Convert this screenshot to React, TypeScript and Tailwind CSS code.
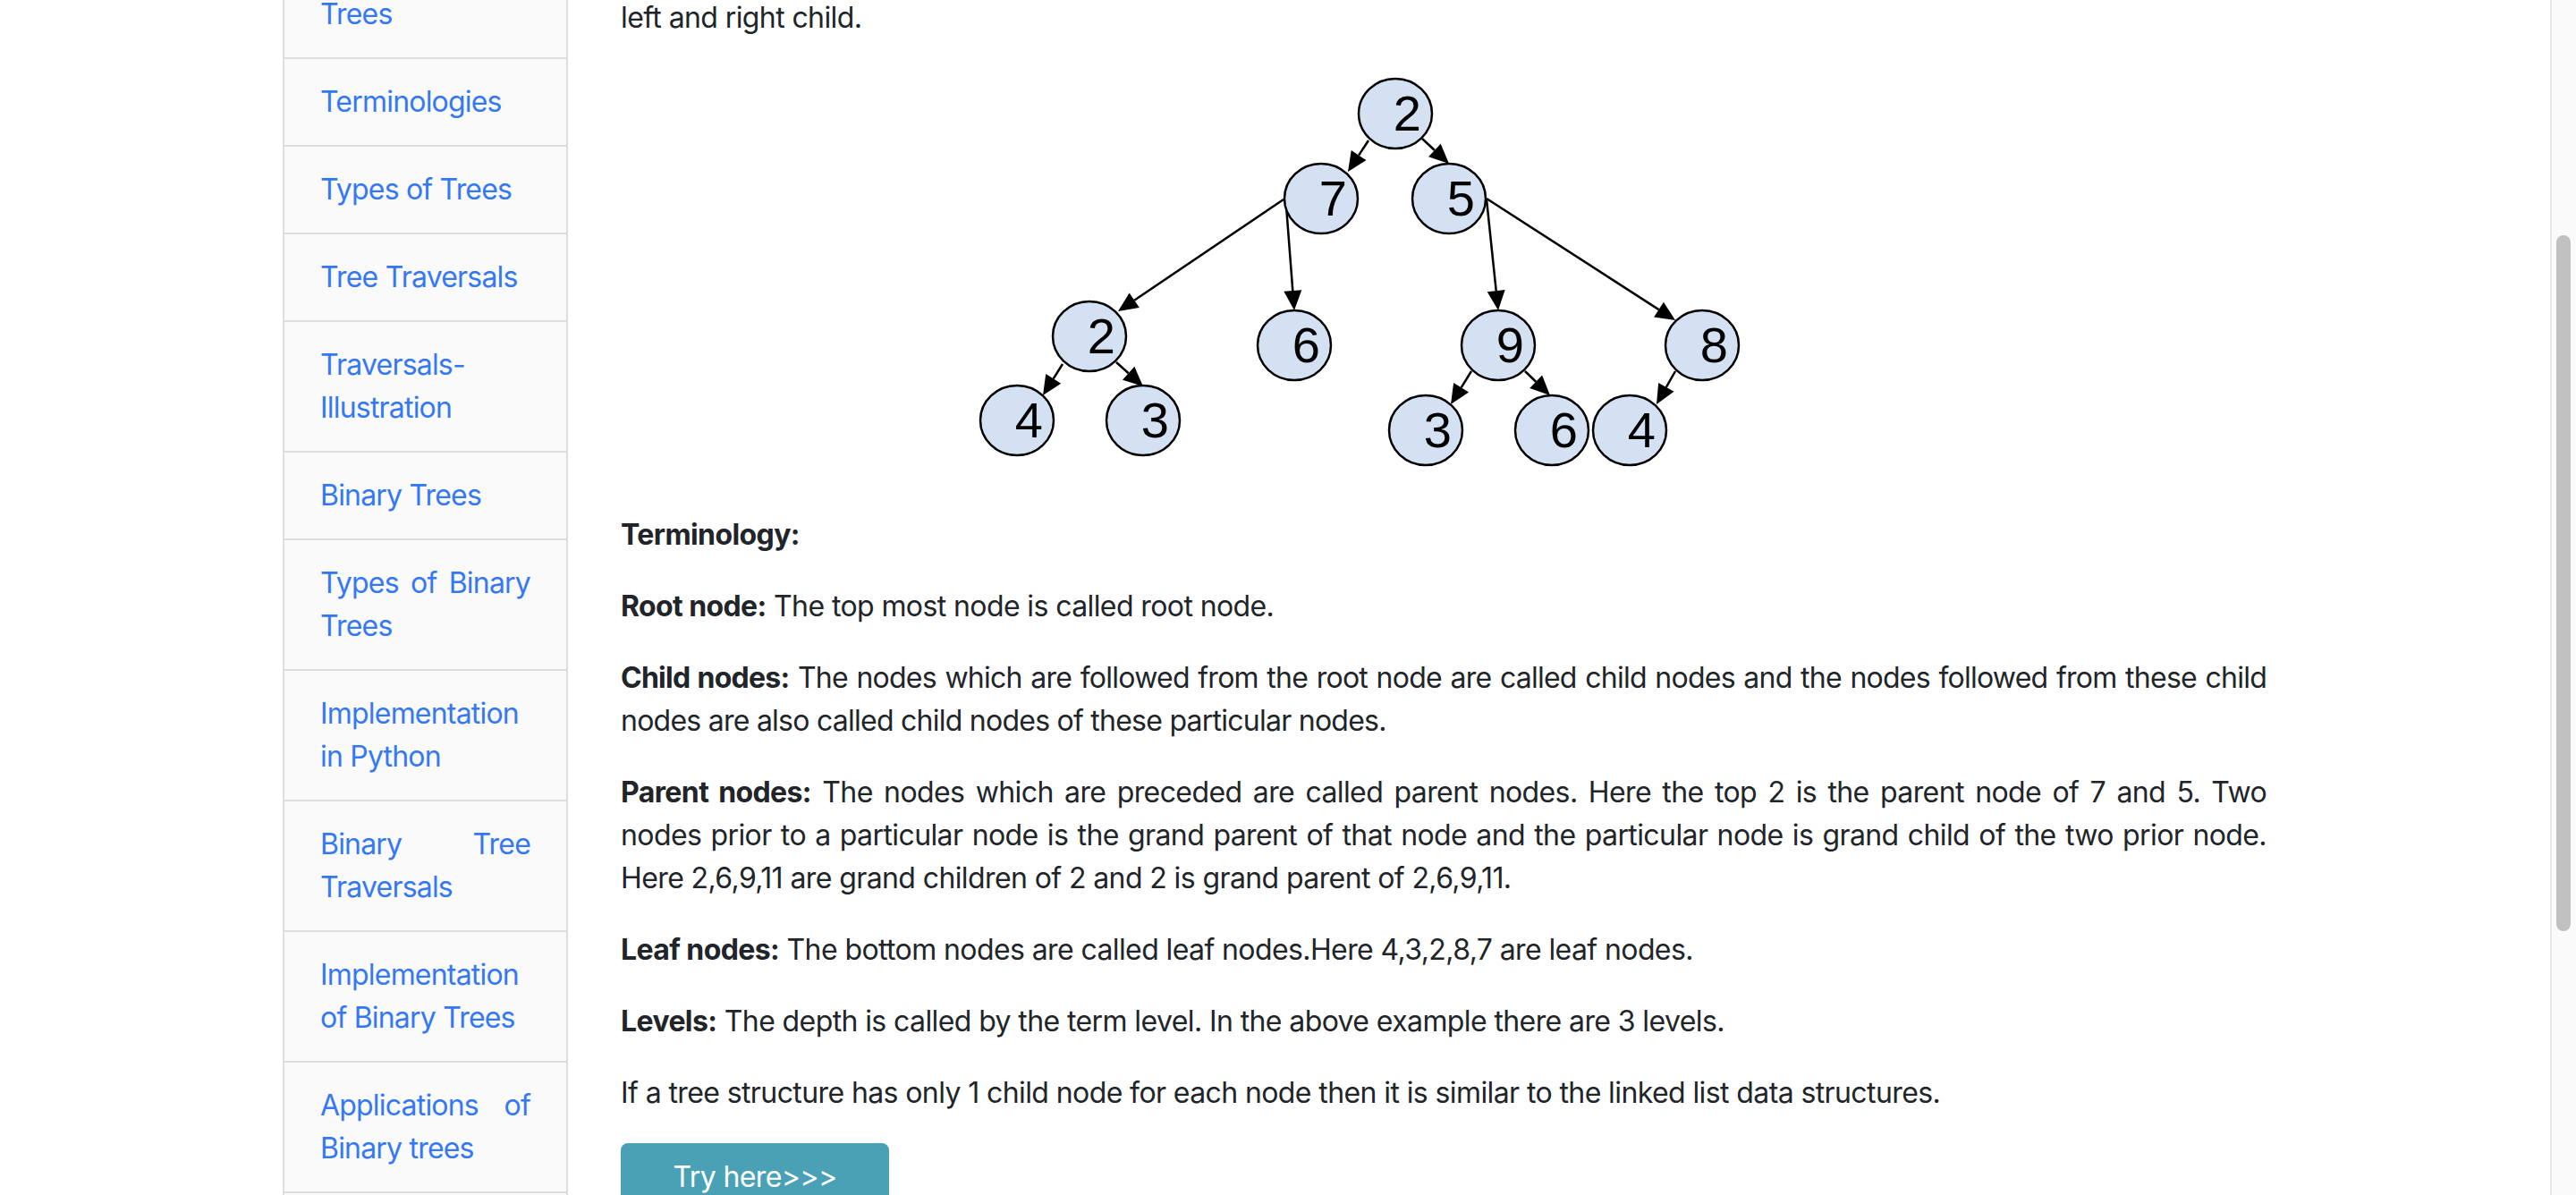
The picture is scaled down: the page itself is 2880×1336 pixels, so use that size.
import React from "react";

const sideItems = [
  "Introduction to Trees",
  "Terminologies",
  "Types of Trees",
  "Tree Traversals",
  "Traversals-Illustration",
  "Binary Trees",
  "Types of Binary Trees",
  "Implementation in Python",
  "Binary Tree Traversals",
  "Implementation of Binary Trees",
  "Applications of Binary trees",
  "Binary Search Trees",
];

// tree picture, coords relative to the image box
const nodes = [
  { x: 866, y: 51, label: "2" },
  { x: 783, y: 146, label: "7" },
  { x: 926, y: 146, label: "5" },
  { x: 524, y: 300, label: "2" },
  { x: 753, y: 310, label: "6" },
  { x: 981, y: 310, label: "9" },
  { x: 1209, y: 310, label: "8" },
  { x: 443, y: 394, label: "4" },
  { x: 584, y: 394, label: "3" },
  { x: 900, y: 405, label: "3" },
  { x: 1041, y: 405, label: "6" },
  { x: 1128, y: 405, label: "4" },
];

const edges = [
  [836, 81, 813, 116],
  [896, 79, 926, 107],
  [741, 147, 556, 272],
  [744, 154, 753, 271],
  [494, 331, 472, 366],
  [554, 329, 584, 356],
  [968, 147, 981, 271],
  [968, 146, 1179, 282],
  [951, 339, 928, 376],
  [1011, 339, 1039, 366],
  [1179, 339, 1158, 376],
];

function Arrow({ e }: { e: number[] }) {
  const [x1, y1, x2, y2] = e;
  const dx = x2 - x1;
  const dy = y2 - y1;
  const len = Math.hypot(dx, dy);
  const ux = dx / len;
  const uy = dy / len;
  const hl = 22;
  const hw = 10;
  const bx = x2 - ux * hl;
  const by = y2 - uy * hl;
  const pts = `${x2},${y2} ${bx - uy * hw},${by + ux * hw} ${bx + uy * hw},${by - ux * hw}`;
  return (
    <g>
      <line x1={x1} y1={y1} x2={bx} y2={by} stroke="#000" strokeWidth={2.5} />
      <polygon points={pts} fill="#000" />
    </g>
  );
}

function TreePicture() {
  return (
    <svg width="1840" height="466" viewBox="0 0 1840 466" className="block mb-[32px]">
      {edges.map((e, i) => (
        <Arrow key={i} e={e} />
      ))}
      {nodes.map((n, i) => (
        <g key={i}>
          <ellipse cx={n.x} cy={n.y} rx={41} ry={39} fill="#d4e1f2" stroke="#000" strokeWidth={2.5} />
          <text
            x={n.x + 13}
            y={n.y + 19}
            textAnchor="middle"
            fontSize="56"
            fontFamily="'Liberation Sans', Arial, sans-serif"
            fill="#000"
          >
            {n.label}
          </text>
        </g>
      ))}
    </svg>
  );
}

function Sidebar() {
  return (
    <div className="w-[319px] shrink-0">
      <ul className="-mt-[82px] border-2 border-b-0 border-[#dedede] bg-[#fafafa]">
        {sideItems.map((item) => (
          <li key={item} className="border-b-2 border-[#dedede] px-[40px] py-[24px] text-justify tracking-[-0.8px]">
            <a className="text-[#3478f6]">{item}</a>
          </li>
        ))}
      </ul>
    </div>
  );
}

function Term({ label, className, children }: { label: string; className?: string; children: React.ReactNode }) {
  return (
    <p className={`mb-[32px] text-justify ${className ?? ""}`}>
      <b className="font-bold">{label}</b> {children}
    </p>
  );
}

export default function App() {
  return (
    <div
      className="flex h-[1336px] w-[2880px] overflow-hidden bg-white text-[32px] leading-[48px] tracking-[-0.6px] text-[#212529]"
      style={{ fontFamily: "Inter, 'Noto Sans', sans-serif" }}
    >
      <div className="flex flex-1 pl-[316px]">
        <Sidebar />
        <div className="ml-[59px] w-[1840px] -mt-[4px]">
          <p className="mb-[32px]">left and right child.</p>
          <TreePicture />
          <p className="mb-[32px] font-bold">Terminology:</p>
          <Term label="Root node:">The top most node is called root node.</Term>
          <Term label="Child nodes:" className="tracking-[-0.75px]">
            The nodes which are followed from the root node are called child nodes and the nodes followed from these
            child nodes are also called child nodes of these particular nodes.
          </Term>
          <Term label="Parent nodes:">
            The nodes which are preceded are called parent nodes. Here the top 2 is the parent node of 7 and 5. Two
            nodes prior to a particular node is the grand parent of that node and the particular node is grand child of
            the two prior node. Here 2,6,9,11 are grand children of 2 and 2 is grand parent of 2,6,9,11.
          </Term>
          <Term label="Leaf nodes:">The bottom nodes are called leaf nodes.Here 4,3,2,8,7 are leaf nodes.</Term>
          <Term label="Levels:">The depth is called by the term level. In the above example there are 3 levels.</Term>
          <p className="mb-[32px]">
            If a tree structure has only 1 child node for each node then it is similar to the linked list data
            structures.
          </p>
          <button className="w-[300px] rounded-[8px] border-2 border-[#4aa1b6] bg-[#4aa1b6] py-[12px] text-white">
            Try here&gt;&gt;&gt;
          </button>
        </div>
      </div>
      <div className="flex w-[29px] shrink-0 justify-center border-l-2 border-[#e8e8e8] bg-[#fafafa]">
        <div className="ml-[-2px] mt-[263px] h-[778px] w-[16px] rounded-full bg-[#c1c1c1]" />
      </div>
    </div>
  );
}
